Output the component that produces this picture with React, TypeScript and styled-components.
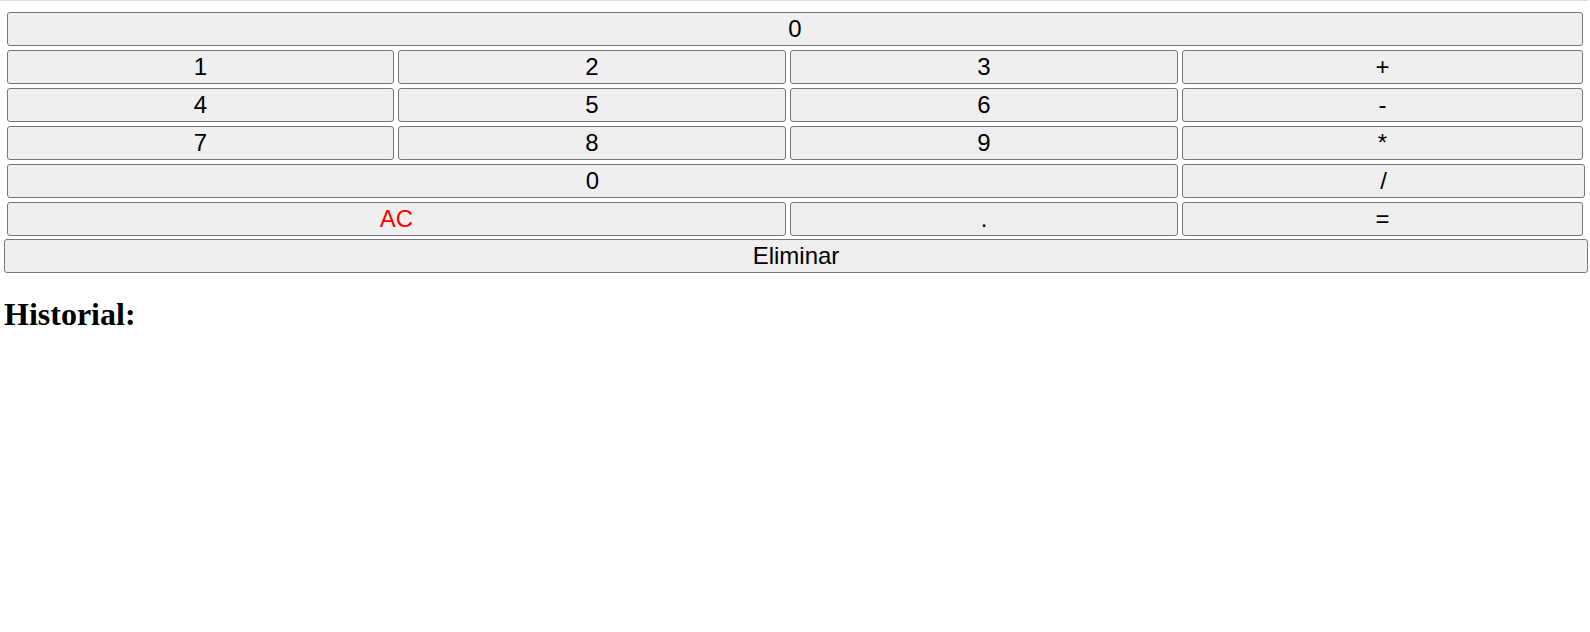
import React, { useState } from "react";
import styled, { createGlobalStyle } from "styled-components";

const GlobalStyle = createGlobalStyle`
  html, body {
    margin: 0;
    padding: 0;
    background: #ffffff;
  }
  body {
    font-family: "Liberation Serif", "Times New Roman", serif;
  }
`;

const Page = styled.div`
  border-top: 1px solid #dadada;
  padding: 11px 0 0 4px;
  width: 1584px;
`;

const Keypad = styled.div`
  display: grid;
  grid-template-columns: 387px 388px 388px 1fr;
  grid-auto-rows: 34px;
  gap: 4px;
  margin: 0 5px 0 3px;
`;

const Key = styled.button<{ $span?: number; $danger?: boolean; $extend?: boolean }>`
  grid-column: span ${(p) => p.$span ?? 1};
  margin-right: ${(p) => (p.$extend ? "-2px" : "0")};
  box-sizing: border-box;
  height: 34px;
  padding: 0 6px;
  background: #efefef;
  border: 1px solid #767676;
  border-radius: 3px;
  font-family: "Liberation Sans", Arial, sans-serif;
  font-size: 24px;
  line-height: 1;
  color: ${(p) => (p.$danger ? "#ff0000" : "#000000")};
  display: flex;
  align-items: center;
  justify-content: center;
  cursor: pointer;
`;

const WideButton = styled.button`
  display: flex;
  align-items: center;
  justify-content: center;
  box-sizing: border-box;
  width: 1584px;
  height: 34px;
  margin-top: 3px;
  padding: 0;
  background: #efefef;
  border: 1px solid #767676;
  border-radius: 3px;
  font-family: "Liberation Sans", Arial, sans-serif;
  font-size: 24px;
  line-height: 1;
  color: #000000;
  cursor: pointer;
`;

const Heading = styled.h1`
  margin: 23px 0 21px;
  font-family: "Liberation Serif", "Times New Roman", serif;
  font-size: 32px;
  font-weight: bold;
  color: #000000;
`;

type KeyDef = { label: string; span?: number; danger?: boolean; extend?: boolean };

const keys: KeyDef[] = [
  { label: "1" },
  { label: "2" },
  { label: "3" },
  { label: "+" },
  { label: "4" },
  { label: "5" },
  { label: "6" },
  { label: "-" },
  { label: "7" },
  { label: "8" },
  { label: "9" },
  { label: "*" },
  { label: "0", span: 3 },
  { label: "/", extend: true },
  { label: "AC", span: 2, danger: true },
  { label: "." },
  { label: "=" },
];

export default function App() {
  const [display] = useState("0");
  return (
    <>
      <GlobalStyle />
      <Page>
        <Keypad>
          <Key $span={4}>{display}</Key>
          {keys.map((k, i) => (
            <Key key={i} $span={k.span} $danger={k.danger} $extend={k.extend}>
              {k.label}
            </Key>
          ))}
        </Keypad>
        <WideButton>Eliminar</WideButton>
        <Heading>Historial:</Heading>
      </Page>
    </>
  );
}
